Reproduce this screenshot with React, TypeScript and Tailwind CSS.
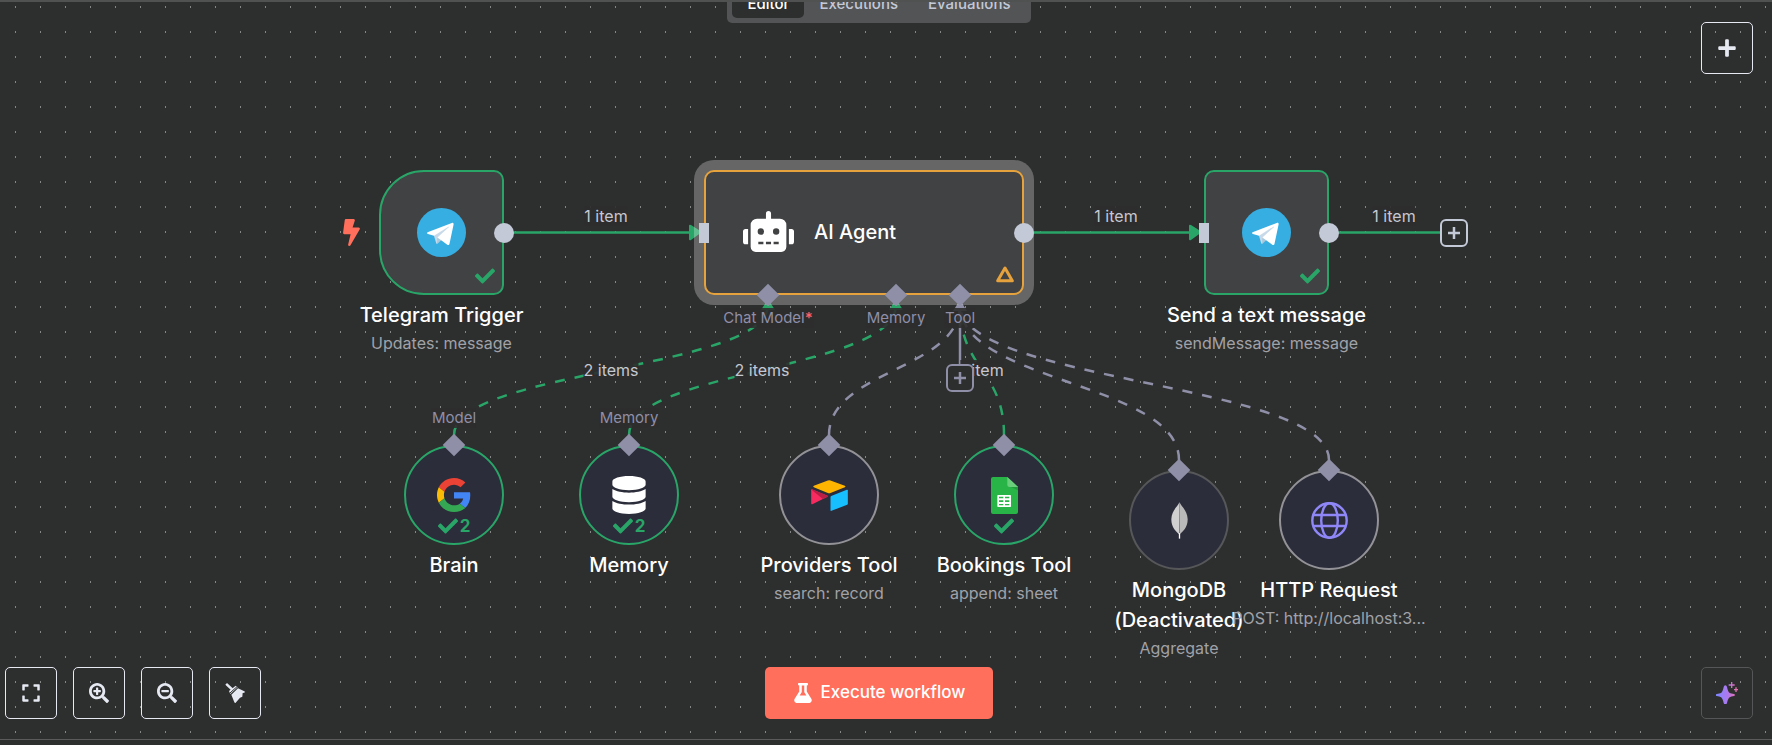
import type { ReactNode } from "react";
import { FaBolt, FaCheck, FaDatabase, FaExpand, FaFlask, FaPlus, FaRobot, FaSearchMinus, FaSearchPlus } from "react-icons/fa";

const GREEN = "#29a568";
const GREY = "#8f8fa8";

function TelegramIcon() {
  return (
    <svg viewBox="0 0 240 240" className="size-[49px]" aria-hidden="true">
      <circle cx="120" cy="120" r="120" fill="#37aee2" />
      <path fill="#c8daea" d="M98 175c-3.888 0-3.227-1.468-4.568-5.17L82 132.207 170 80" />
      <path fill="#a9c9dd" d="M98 175c3 0 4.325-1.372 6-3l16-15.558-19.958-12.035" />
      <path
        fill="#fff"
        d="M100.04 144.41l48.36 35.729c5.519 3.045 9.501 1.468 10.876-5.123l19.685-92.763c2.015-8.08-3.08-11.746-8.36-9.349l-115.59 44.571c-7.89 3.165-7.843 7.567-1.438 9.528l29.663 9.259 68.673-43.325c3.242-1.966 6.218-.91 3.776 1.258"
      />
    </svg>
  );
}

function GoogleIcon() {
  return (
    <svg viewBox="0 0 48 48" className="size-[34px]" aria-hidden="true">
      <path fill="#EA4335" d="M24 9.5c3.54 0 6.71 1.22 9.21 3.6l6.85-6.85C35.9 2.38 30.47 0 24 0 14.62 0 6.51 5.38 2.56 13.22l7.98 6.19C12.43 13.72 17.74 9.5 24 9.5z" />
      <path fill="#4285F4" d="M46.98 24.55c0-1.57-.15-3.09-.38-4.55H24v9.02h12.94c-.58 2.96-2.26 5.48-4.78 7.18l7.73 6c4.51-4.18 7.09-10.36 7.09-17.65z" />
      <path fill="#FBBC05" d="M10.53 28.59c-.48-1.45-.76-2.99-.76-4.59s.27-3.14.76-4.59l-7.98-6.19C.92 16.46 0 20.12 0 24c0 3.88.92 7.54 2.56 10.78l7.97-6.19z" />
      <path fill="#34A853" d="M24 48c6.48 0 11.93-2.13 15.89-5.81l-7.73-6c-2.15 1.45-4.92 2.3-8.16 2.3-6.26 0-11.57-4.22-13.47-9.91l-7.98 6.19C6.51 42.62 14.62 48 24 48z" />
    </svg>
  );
}

function AirtableIcon() {
  return (
    <svg viewBox="0 0 110 93" className="h-[31px] w-[37px]" aria-hidden="true">
      <path fill="#ffb400" d="M50 1.500q4-1.500 8 0l43 16q4 2 0 4L58 39q-4 1.500-8 0L8 21.500q-4-2 0-4z" />
      <path fill="#18bfff" d="M58 51q0-2 2-3l47-18.500q3-1 3 2V71q0 2-2 3L61 92.500q-3 1-3-2z" />
      <path fill="#f82b60" d="M0 31q0-4 4-2.500L49 47q2 1.500 0 3L5 72q-5 2-5-2z" />
      <path fill="#ba1e45" d="M4 28.500L49 47q2 1.500 0 3l-14 7L1 29q1-1.500 3-.5z" />
    </svg>
  );
}

function SheetsIcon() {
  return (
    <svg viewBox="0 0 81 111" className="h-[37px] w-[27px]" aria-hidden="true">
      <path fill="#28b446" d="M6 0h43l32 30v75q0 6-6 6H6q-6 0-6-6V6q0-6 6-6z" />
      <path fill="#219b3c" d="M55 28h26v12z" />
      <path fill="#6ace7c" d="M49 0l32 30H55q-6 0-6-6z" />
      <rect x="19" y="54" width="41" height="36" rx="2" fill="#fff" />
      <path fill="#28b446" d="M24 59h13v5H24zM42 59h13v5H42zM24 70h13v5H24zM42 70h13v5H42zM24 81h13v4H24zM42 81h13v4H42z" />
    </svg>
  );
}

function LeafIcon() {
  return (
    <svg viewBox="0 0 52 111" className="h-[37px] w-[17px]" aria-hidden="true">
      <path fill="#d0d0d0" d="M26 0C20 14 2 24 1 52c0 26 15 38 24 46z" />
      <path fill="#b9b9b9" d="M26 0c6 14 24 24 25 52 0 26-15 38-25 46z" />
      <path fill="#fff" d="M24 94h4v17h-4z" />
    </svg>
  );
}

function GlobeIcon() {
  return (
    <svg viewBox="0 0 37 37" className="size-[37px]" fill="none" stroke="#8f87f7" strokeWidth="2.400" aria-hidden="true">
      <circle cx="18.500" cy="18.500" r="17.200" />
      <ellipse cx="18.500" cy="18.500" rx="8.300" ry="17.200" />
      <path d="M2 13h33M2 24h33" />
    </svg>
  );
}

function BroomIcon() {
  return (
    <svg viewBox="0 0 60 60" className="size-5" fill="currentColor" aria-hidden="true">
      <path d="M1 5l5-5 19 17-5 6z" />
      <path d="M12 24L32 8l6 5-22 20z" />
      <path d="M19 35l20-19 19 9q3 2 0 4l-5 1-1 11-7 3-13 15q-2 2-4-1z" />
      <path d="M15 30L36 11" stroke="#2d2e2e" strokeWidth="3" />
    </svg>
  );
}

function SparkleIcon() {
  return (
    <svg viewBox="0 0 66 66" className="size-[22px]" aria-hidden="true">
      <defs>
        <linearGradient id="spark" x1="0" y1="0" x2="66" y2="0" gradientUnits="userSpaceOnUse">
          <stop offset="0" stopColor="#7f86ff" />
          <stop offset=".5" stopColor="#ab79ee" />
          <stop offset="1" stopColor="#ef6fa4" />
        </linearGradient>
      </defs>
      <g fill="url(#spark)">
        <path d="M28 10q4 0 5 5 3 15 8 18 4 2 13 3 3 1 3 3t-3 3q-9 1-13 4-5 3-8 17-1 4-5 4t-5-4q-3-14-8-17-4-3-13-4-3-1-3-3t3-3q9-1 13-3 5-3 8-18 1-5 5-5z" />
        <path d="M45 0h4v7h7v4h-7v7h-4v-7h-7V7h7zM58 16h4v5h4v4h-4v5h-4v-5h-4v-4h4z" />
      </g>
    </svg>
  );
}

function Edge({ from, to, color }: { from: [number, number]; to: [number, number]; color: string }) {
  const mid = (from[1] + to[1]) / 2;
  return (
    <path
      d={`M${from[0]} ${from[1]}C${from[0]} ${mid} ${to[0]} ${mid} ${to[0]} ${to[1]}`}
      stroke={color}
      strokeWidth="2.500"
      strokeDasharray="10 10"
      fill="none"
    />
  );
}

function Edges() {
  return (
    <svg className="absolute inset-0 size-full" aria-hidden="true">
      <defs>
        <pattern id="dots" width="25" height="25" patternUnits="userSpaceOnUse" x="15" y="4">
          <rect width="1" height="2" fill="#858686" />
        </pattern>
      </defs>
      <rect width="100%" height="100%" fill="url(#dots)" />
      <Edge from={[829, 433]} to={[960, 303]} color={GREY} />
      <Edge from={[1179, 458]} to={[960, 303]} color={GREY} />
      <Edge from={[1329, 458]} to={[960, 303]} color={GREY} />
      <Edge from={[1004, 433]} to={[960, 303]} color={GREEN} />
      <Edge from={[454, 433]} to={[768, 303]} color={GREEN} />
      <Edge from={[629, 433]} to={[896, 303]} color={GREEN} />
      <path d="M504 230.500h186M1024 230.500h166M1329 230.500h111" stroke={GREEN} strokeWidth="2.500" />
      <path d="M960 303v60" stroke={GREY} strokeWidth="2.500" />
      <path d="M689 224q0-2 2-1l11 7-11 8q-2 1-2-1zM1189 224q0-2 2-1l11 7-11 8q-2 1-2-1z" fill={GREEN} />
      <path d="M761 308l7-11 7 11zM889 308l7-11 7 11z" fill={GREEN} />
      <path d="M953 309l7-11 7 11z" fill={GREY} />
    </svg>
  );
}

function EdgeLabel({ at, children }: { at: string; children: ReactNode }) {
  return (
    <span className={`absolute -translate-x-1/2 -translate-y-1/2 whitespace-nowrap bg-[#2d2e2e]/90 text-base leading-5 text-[#c5c8d2] ${at}`}>
      {children}
    </span>
  );
}

function PortLabel({ at, required, children }: { at: string; required?: boolean; children: ReactNode }) {
  return (
    <span className={`absolute -translate-x-1/2 -translate-y-1/2 whitespace-nowrap bg-[#2d2e2e]/90 text-[15px] leading-5 text-[#8f8fa8] ${at}`}>
      {children}
      {required && <span className="font-semibold text-[#ff5f66]">*</span>}
    </span>
  );
}

function Diamond({ at }: { at: string }) {
  return <span className={`absolute size-4 -translate-x-1/2 -translate-y-1/2 rotate-45 bg-[#8f8fa8] ${at}`} />;
}

function OutPort() {
  return <span className="absolute top-1/2 left-full size-5 -translate-x-1/2 -translate-y-1/2 rounded-full bg-[#c3c9d6]" />;
}

function InPort() {
  return <span className="absolute top-1/2 left-0 h-5 w-[10px] -translate-x-1/2 -translate-y-1/2 bg-[#c3c9d6]" />;
}

function Caption({ name, detail }: { name: string; detail?: string }) {
  return (
    <div className="absolute top-full left-1/2 mt-[5px] w-[200px] -translate-x-1/2 text-center">
      <p className="text-xl leading-[30px] font-medium text-white">{name}</p>
      {detail && <p className="text-base leading-[26px] whitespace-nowrap text-[#a0a2a8]">{detail}</p>}
    </div>
  );
}

type SquareProps = { at: string; shape: string; name: string; detail: string; input?: boolean };

function SquareNode({ at, shape, name, detail, input }: SquareProps) {
  return (
    <article className={`absolute size-[125px] ${at}`}>
      <div className={`flex size-full items-center justify-center border-2 border-[#29a568] bg-[#414244] ${shape}`}>
        <TelegramIcon />
      </div>
      <FaCheck className="absolute right-[9px] bottom-[9px] size-5 text-[#29a568]" />
      {input && <InPort />}
      <OutPort />
      <Caption name={name} detail={detail} />
    </article>
  );
}

type RoundProps = { at: string; border: string; icon: ReactNode; name: string; detail?: string; runs?: ReactNode };

function RoundNode({ at, border, icon, name, detail, runs }: RoundProps) {
  return (
    <article className={`absolute size-[100px] ${at}`}>
      <div className={`flex size-full items-center justify-center rounded-full border-2 bg-[#2c2d3b] ${border}`}>{icon}</div>
      {runs !== undefined && (
        <div className="absolute bottom-[9px] left-0 flex w-full items-center justify-center gap-[2px] text-[17px] leading-5 font-bold text-[#29a568]">
          <FaCheck className="size-5" />
          {runs}
        </div>
      )}
      <Diamond at="left-1/2 top-0" />
      <Caption name={name} detail={detail} />
    </article>
  );
}

const roundNodes: RoundProps[] = [
  { at: "left-[404px] top-[443px]", border: "border-[#29a568]", icon: <GoogleIcon />, name: "Brain", runs: "2" },
  { at: "left-[579px] top-[443px]", border: "border-[#29a568]", icon: <FaDatabase className="size-[38px] text-white" />, name: "Memory", runs: "2" },
  { at: "left-[779px] top-[443px]", border: "border-[#929297]", icon: <AirtableIcon />, name: "Providers Tool", detail: "search: record" },
  { at: "left-[954px] top-[443px]", border: "border-[#29a568]", icon: <SheetsIcon />, name: "Bookings Tool", detail: "append: sheet", runs: null },
  { at: "left-[1129px] top-[468px]", border: "border-[#565759]", icon: <LeafIcon />, name: "MongoDB (Deactivated)", detail: "Aggregate" },
  { at: "left-[1279px] top-[468px]", border: "border-[#929297]", icon: <GlobeIcon />, name: "HTTP Request", detail: "POST: http://localhost:3..." },
];

function AgentNode() {
  return (
    <article className="absolute top-[168px] left-[704px] h-[125px] w-[320px]">
      <div className="absolute -inset-[10px] rounded-[20px] bg-white/27" />
      <div className="relative flex size-full items-center gap-5 rounded-[10px] border-2 border-[#e6a23c] bg-[#414244] pb-0.5 pl-[37px]">
        <FaRobot className="h-[41px] w-[51px] text-white" />
        <h2 className="text-xl font-medium text-white">AI Agent</h2>
      </div>
      <svg viewBox="0 0 18 17" className="absolute right-[10px] bottom-3 h-[17px] w-[18px]" aria-label="Warning">
        <path d="M9 2L16.300 14.800H1.700z" fill="none" stroke="#e6a23c" strokeWidth="3" strokeLinejoin="round" />
      </svg>
      <InPort />
      <OutPort />
      <Diamond at="left-[64px] top-full" />
      <Diamond at="left-[192px] top-full" />
      <Diamond at="left-[256px] top-full" />
    </article>
  );
}

function AddButton({ at, tone, label }: { at: string; tone: string; label: string }) {
  return (
    <button type="button" aria-label={label} className={`absolute flex size-7 items-center justify-center rounded-md border-2 bg-[#2d2e2e] ${at} ${tone}`}>
      <svg viewBox="0 0 14 14" className="size-[14px]" aria-hidden="true">
        <path d="M7 1v12M1 7h12" stroke="currentColor" strokeWidth="2.500" />
      </svg>
    </button>
  );
}

function Canvas() {
  return (
    <section aria-label="Workflow canvas" className="absolute inset-0 overflow-hidden">
      <Edges />
      <EdgeLabel at="left-[606px] top-[214px]">1 item</EdgeLabel>
      <EdgeLabel at="left-[1116px] top-[214px]">1 item</EdgeLabel>
      <EdgeLabel at="left-[1394px] top-[214px]">1 item</EdgeLabel>
      <EdgeLabel at="left-[611px] top-[368px]">2 items</EdgeLabel>
      <EdgeLabel at="left-[762px] top-[368px]">2 items</EdgeLabel>
      <EdgeLabel at="left-[982px] top-[368px]">1 item</EdgeLabel>

      <FaBolt className="absolute top-[217px] left-[338px] size-[27px] text-[#ff6f5c]" />
      <SquareNode at="left-[379px] top-[168px]" shape="rounded-l-[45px] rounded-r-[10px]" name="Telegram Trigger" detail="Updates: message" />
      <AgentNode />
      <SquareNode at="left-[1204px] top-[168px]" shape="rounded-[10px]" name="Send a text message" detail="sendMessage: message" input />
      {roundNodes.map((node) => (
        <RoundNode key={node.at} {...node} />
      ))}

      <PortLabel at="left-[768px] top-[316px]" required>Chat Model</PortLabel>
      <PortLabel at="left-[896px] top-[316px]">Memory</PortLabel>
      <PortLabel at="left-[960px] top-[316px]">Tool</PortLabel>
      <PortLabel at="left-[454px] top-[416px]">Model</PortLabel>
      <PortLabel at="left-[629px] top-[416px]">Memory</PortLabel>
      <AddButton at="left-[946px] top-[362px]" tone="border-[#8f8fa8] text-[#8f8fa8]" label="Add tool" />
      <AddButton at="left-[1440px] top-[217px]" tone="border-[#c3c9d6] text-[#c3c9d6]" label="Add next node" />
    </section>
  );
}

function IconButton({ label, tone = "border-[#e6e9f2]", children }: { label: string; tone?: string; children: ReactNode }) {
  return (
    <button type="button" aria-label={label} className={`flex size-[52px] items-center justify-center rounded-[5px] border bg-transparent text-[#e6e9f2] ${tone}`}>
      {children}
    </button>
  );
}

export default function App() {
  return (
    <div className="flex min-h-screen flex-col bg-[#2d2e2e] font-['Inter',sans-serif]">
      <main className="relative flex flex-1 flex-col justify-between overflow-hidden border-t-2 border-b border-t-[#505151] border-b-[#5b5b5c]">
        <Canvas />

        <header className="relative mr-[14px] grid grid-cols-[1fr_auto_1fr] items-start px-[5px]">
          <nav aria-label="Views" className="col-start-2 -mt-[19px] flex h-10 rounded-[5px] bg-[#535456] p-[5px] text-[15px] font-medium text-[#c3c9d6]">
            <button type="button" aria-current="page" className="rounded-[5px] bg-[#2d2e2e] px-[15px] pt-0.5 text-white">Editor</button>
            <button type="button" className="px-[15px] pt-0.5">Executions</button>
            <button type="button" className="px-[15px] pt-0.5">Evaluations</button>
          </nav>
          <div className="mt-5 justify-self-end">
            <IconButton label="Add node"><FaPlus className="size-5" /></IconButton>
          </div>
        </header>

        <footer className="relative mr-[14px] mb-5 grid grid-cols-[1fr_auto_1fr] items-center px-[5px]">
          <div className="flex gap-4">
            <IconButton label="Fit view"><FaExpand className="size-5" /></IconButton>
            <IconButton label="Zoom in"><FaSearchPlus className="size-5" /></IconButton>
            <IconButton label="Zoom out"><FaSearchMinus className="size-5" /></IconButton>
            <IconButton label="Tidy up"><BroomIcon /></IconButton>
          </div>
          <button type="button" className="flex h-[52px] items-center gap-2 rounded-[5px] bg-[#ff6f5c] px-7 text-[17px] font-medium text-white">
            <FaFlask className="size-5" />
            Execute workflow
          </button>
          <div className="justify-self-end">
            <IconButton label="Ask assistant" tone="border-[#555657]"><SparkleIcon /></IconButton>
          </div>
        </footer>
      </main>
      <div className="h-[5px]" />
    </div>
  );
}
